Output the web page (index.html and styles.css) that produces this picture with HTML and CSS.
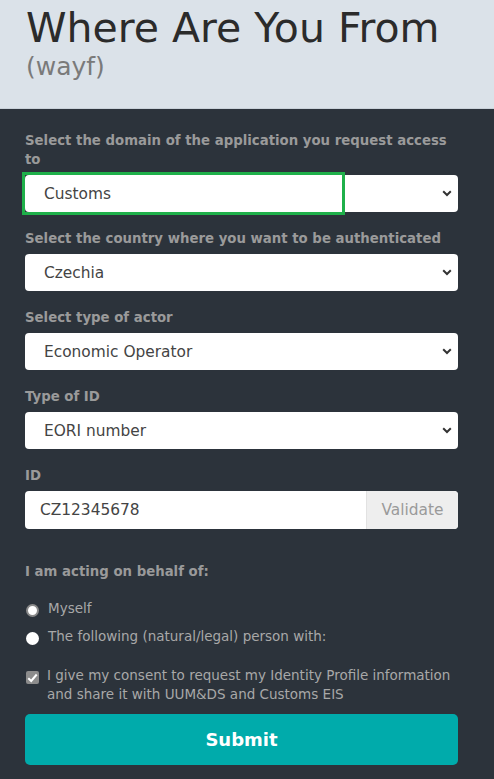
FILE: index.html
```html
<!DOCTYPE html>
<html lang="en">
<head>
<meta charset="utf-8">
<title>Where Are You From</title>
<link rel="stylesheet" href="styles.css">
</head>
<body>
<header class="header">
  <h1 class="title">Where Are You From</h1>
  <div class="subtitle">(wayf)</div>
</header>
<main class="form">
  <div class="field">
    <div class="label">Select the domain of the application you request access to</div>
    <div class="select">
      <span class="select-value">Customs</span>
      <svg class="chevron" width="10" height="7" viewBox="0 0 10 7"><path d="M1.2 1.3 L5 5 L8.8 1.3" fill="none" stroke="#333" stroke-width="2"/></svg>
      <span class="highlight"></span>
    </div>
  </div>
  <div class="field">
    <div class="label">Select the country where you want to be authenticated</div>
    <div class="select">
      <span class="select-value">Czechia</span>
      <svg class="chevron" width="10" height="7" viewBox="0 0 10 7"><path d="M1.2 1.3 L5 5 L8.8 1.3" fill="none" stroke="#333" stroke-width="2"/></svg>
    </div>
  </div>
  <div class="field">
    <div class="label">Select type of actor</div>
    <div class="select">
      <span class="select-value">Economic Operator</span>
      <svg class="chevron" width="10" height="7" viewBox="0 0 10 7"><path d="M1.2 1.3 L5 5 L8.8 1.3" fill="none" stroke="#333" stroke-width="2"/></svg>
    </div>
  </div>
  <div class="field">
    <div class="label">Type of ID</div>
    <div class="select">
      <span class="select-value">EORI number</span>
      <svg class="chevron" width="10" height="7" viewBox="0 0 10 7"><path d="M1.2 1.3 L5 5 L8.8 1.3" fill="none" stroke="#333" stroke-width="2"/></svg>
    </div>
  </div>
  <div class="field">
    <div class="label">ID</div>
    <div class="input-group">
      <span class="input-value">CZ12345678</span>
      <span class="validate">Validate</span>
    </div>
  </div>
  <div class="behalf">
    <div class="label">I am acting on behalf of:</div>
    <div class="radios">
      <div class="radio-row"><span class="radio radio-ring"></span><span class="radio-text">Myself</span></div>
      <div class="radio-row"><span class="radio"></span><span class="radio-text">The following (natural/legal) person with:</span></div>
    </div>
  </div>
  <div class="consent">
    <span class="checkbox"><svg width="11" height="10" viewBox="0 0 11 10"><path d="M1.3 5.2 L4.2 8 L9.7 1.5" fill="none" stroke="#fff" stroke-width="2"/></svg></span>
    <span class="consent-text">I give my consent to request my Identity Profile information and share it with UUM&amp;DS and Customs EIS</span>
  </div>
  <div class="submit">Submit</div>
</main>
</body>
</html>
```
FILE: styles.css
```css
html, body {
  margin: 0;
  padding: 0;
}
body {
  font-family: "DejaVu Sans", Verdana, sans-serif;
  background: #2c333b;
  width: 494px;
  min-height: 779px;
}
.header {
  background: #dbe2e9;
  height: 109px;
  border-bottom: 1px solid #c9d1d9;
  padding-left: 26px;
  box-sizing: border-box;
}
.title {
  margin: 0;
  padding-top: 4px;
  font-size: 41px;
  line-height: 48px;
  font-weight: normal;
  color: #2b2b2b;
}
.subtitle {
  font-size: 25px;
  line-height: 30px;
  color: #7a7a7a;
}
.form {
  padding: 22px 36px 0 25px;
  display: flex;
  flex-direction: column;
}
.field {
  margin-bottom: 17px;
}
.label {
  font-size: 13.3px;
  line-height: 19px;
  font-weight: bold;
  color: #9a9a9a;
  margin-bottom: 6px;
}
.select {
  position: relative;
  height: 37px;
  background: #fff;
  border-radius: 4px;
  display: flex;
  align-items: center;
  justify-content: space-between;
  padding: 0 6px 0 19px;
}
.select-value {
  font-size: 15.4px;
  color: #444;
}
.chevron {
  display: block;
}
.highlight {
  position: absolute;
  left: -3px;
  top: -3px;
  width: 323px;
  height: 43px;
  border: 3px solid #1fb04a;
  box-sizing: border-box;
}
.input-group {
  height: 38px;
  display: flex;
  background: #fff;
  border-radius: 4px;
  overflow: hidden;
}
.input-value {
  flex: 1;
  display: flex;
  align-items: center;
  padding-left: 15px;
  font-size: 15.4px;
  color: #444;
}
.validate {
  width: 91px;
  background: #eeeeee;
  display: flex;
  align-items: center;
  justify-content: center;
  font-size: 15.4px;
  color: #9a9a9a;
  border-left: 1px solid #e2e2e2;
}
.behalf {
  margin-top: 16px;
}
.behalf .label {
  margin-bottom: 18px;
}
.radios {
  display: flex;
  flex-direction: column;
  gap: 10px;
}
.radio-row {
  display: flex;
  align-items: center;
  gap: 9px;
  height: 18px;
}
.radio {
  width: 13px;
  height: 13px;
  border-radius: 50%;
  background: #fff;
  box-sizing: border-box;
  margin-left: 1px;
  margin-top: 4px;
}
.radio-ring {
  border: 2px solid #8a8a8a;
}
.radio-text {
  font-size: 13.5px;
  color: #a8a8a8;
}
.consent {
  display: flex;
  gap: 8px;
  margin-top: 21px;
}
.checkbox {
  flex: none;
  width: 13px;
  height: 13px;
  background: #8c8c8c;
  border-radius: 2px;
  margin-left: 1px;
  margin-top: 5px;
  display: flex;
  align-items: center;
  justify-content: center;
}
.consent-text {
  font-size: 13.5px;
  line-height: 19px;
  color: #a8a8a8;
}
.submit {
  margin-top: 10px;
  height: 51px;
  border-radius: 5px;
  background: #00abab;
  color: #fff;
  font-size: 18px;
  font-weight: bold;
  display: flex;
  align-items: center;
  justify-content: center;
}
```
